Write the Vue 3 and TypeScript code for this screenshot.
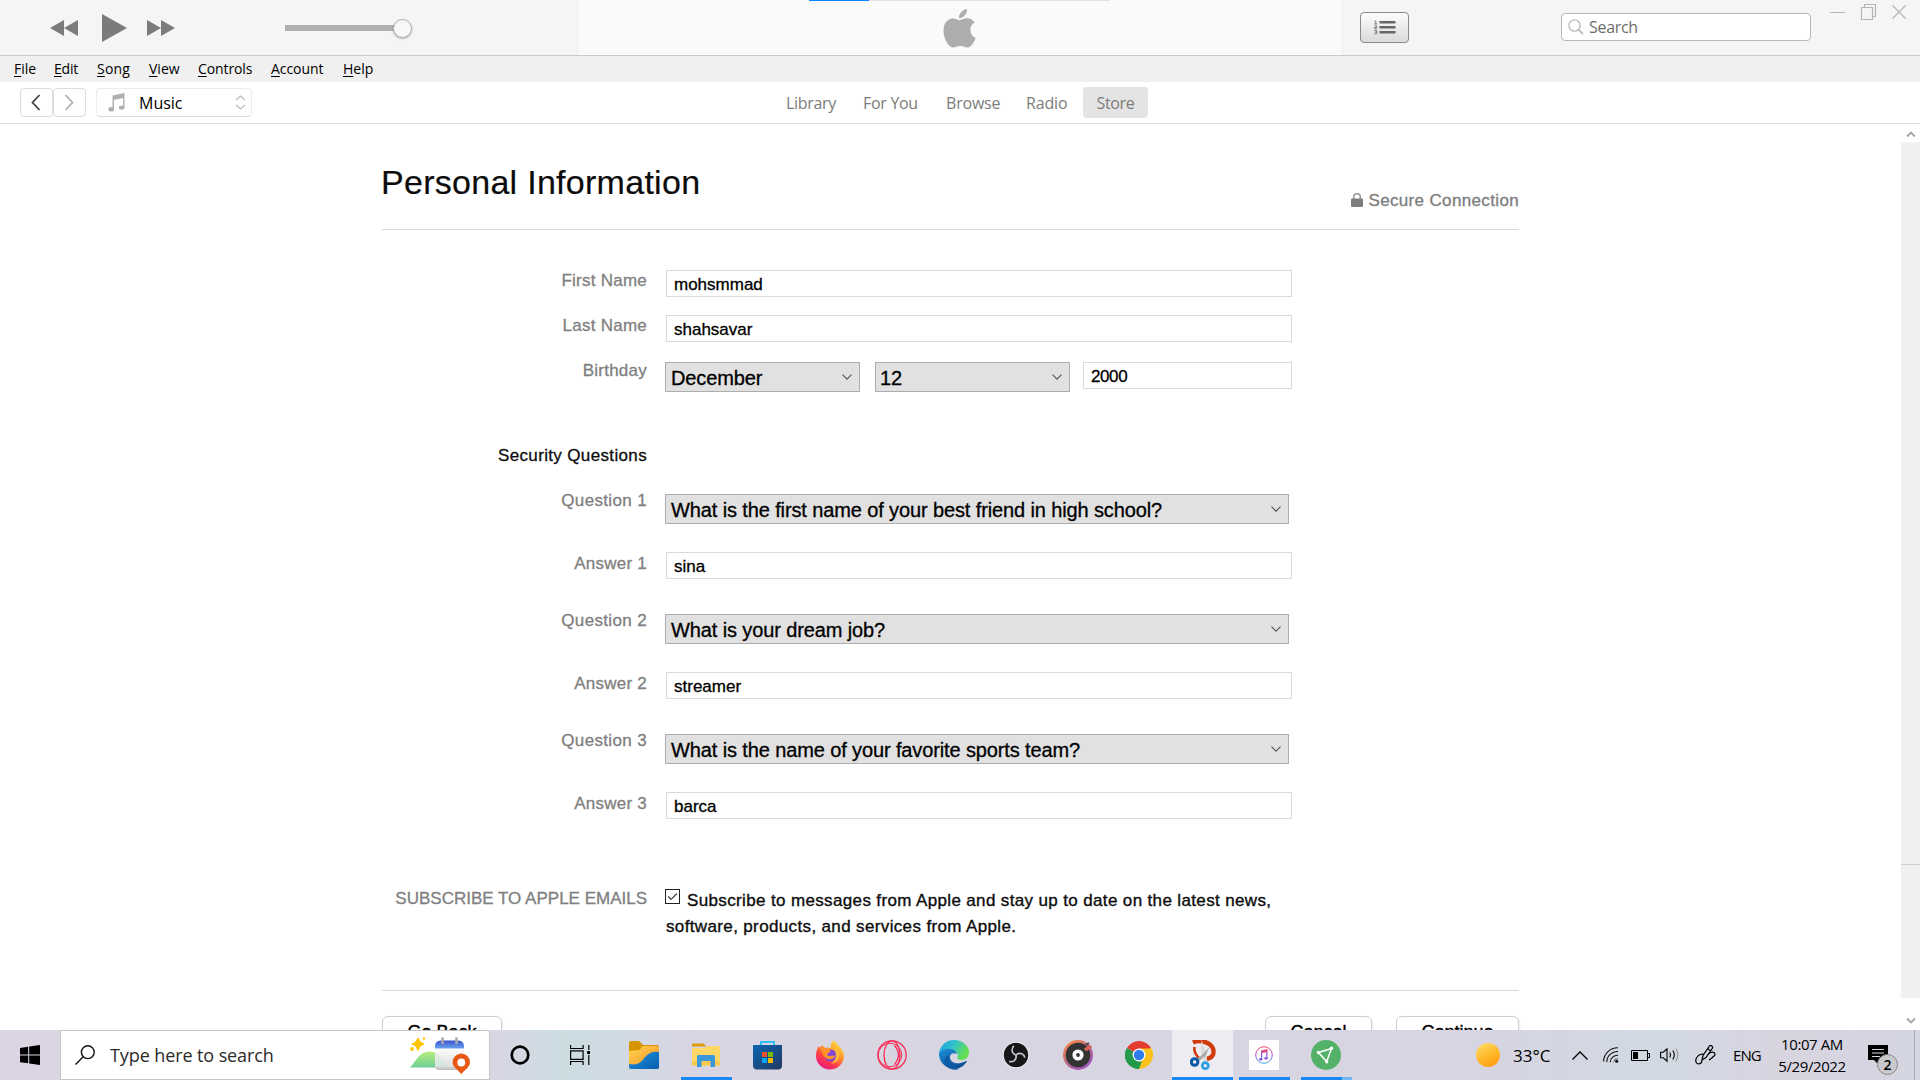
<script setup lang="ts">
interface MenuEntry { key: string; rest: string; cls: string }
interface Question { n: number; question: string; answer: string }

const menu: MenuEntry[] = [
  { key: 'F', rest: 'ile', cls: 'm-file' },
  { key: 'E', rest: 'dit', cls: 'm-edit' },
  { key: 'S', rest: 'ong', cls: 'm-song' },
  { key: 'V', rest: 'iew', cls: 'm-view' },
  { key: 'C', rest: 'ontrols', cls: 'm-controls' },
  { key: 'A', rest: 'ccount', cls: 'm-account' },
  { key: 'H', rest: 'elp', cls: 'm-help' },
]

const tabs = ['Library', 'For You', 'Browse', 'Radio', 'Store']

const questions: Question[] = [
  { n: 1, question: 'What is the first name of your best friend in high school?', answer: 'sina' },
  { n: 2, question: 'What is your dream job?', answer: 'streamer' },
  { n: 3, question: 'What is the name of your favorite sports team?', answer: 'barca' },
]
</script>

<template>
  <div class="screen">
    <header class="player">
      <div class="transport">
        <svg class="rewind" width="28" height="16" viewBox="0 0 28 16"><path d="M14 0v16L0 8zM28 0v16L14 8z" fill="#7b7b7b" /></svg>
        <svg class="play" width="25" height="28" viewBox="0 0 25 28"><path d="M0 0L25 14L0 28z" fill="#7b7b7b" /></svg>
        <svg class="forward" width="28" height="16" viewBox="0 0 28 16"><path d="M0 0v16L14 8zM14 0v16L28 8z" fill="#7b7b7b" /></svg>
        <div class="volume"><div class="knob"></div></div>
      </div>
      <div class="display">
        <div class="progress"><div class="progress-fill"></div></div>
        <svg class="apple" width="33" height="39" viewBox="0 0 33 39" fill="#adadad">
          <path d="M24 0c.4 4.600-3.500 9.200-8 9.200C15.500 4.800 19.700.5 24 0z" />
          <path d="M16.600 11.200c1.800 0 4-1.900 7.300-1.900 3 0 6 1.500 7.700 4.200-3 1.800-4.200 4.600-4.200 7.400 0 3.400 2 6.700 5.200 8-1.500 4.500-4.800 9.700-8.300 9.700-2.600 0-3.600-1.600-7.100-1.600-3.400 0-4.500 1.600-7 1.600C5.500 38.600.5 29.800.5 21.500c0-7.600 4.600-12 9.300-12 3 0 5.300 1.700 6.800 1.700z" />
        </svg>
      </div>
      <div class="tools">
        <button class="queue">
          <svg width="22" height="15" viewBox="0 0 22 15">
            <g fill="#666"><rect x="5.500" y="1" width="16" height="2.500" /><rect x="5.500" y="6" width="16" height="2.500" /><rect x="5.500" y="11" width="16" height="2.500" /></g>
            <g fill="none" stroke="#777" stroke-width=".9"><path d="M.5 1h1.300v3M.3 4h3M.4 6h2.400v1.400H.6v1.400h2.400M.4 10.600h2.400v3.200H.4M.8 12.200h2" /></g>
          </svg>
        </button>
        <div class="search">
          <svg width="16" height="16" viewBox="0 0 16 16" fill="none" stroke="#bdbdbd" stroke-width="1.400"><circle cx="6.500" cy="6.500" r="5.600" /><path d="M10.500 10.500L15 15" stroke-width="1.800" /></svg>
          <span>Search</span>
        </div>
        <div class="window">
          <svg width="78" height="17" viewBox="0 0 78 17" fill="none" stroke="#b5b5b5" stroke-width="1.200">
            <path d="M0 9.500h15M62.500 2.500l13 13M75.500 2.500l-13 13" />
            <path d="M31.500 4.500h11v12h-11zM34.500 4.500v-3h11v12h-3" />
          </svg>
        </div>
      </div>
    </header>

    <nav class="menubar">
      <span v-for="m in menu" :key="m.rest" :class="m.cls"><u>{{ m.key }}</u>{{ m.rest }}</span>
    </nav>

    <div class="subnav">
      <button class="arrow">
        <svg width="10" height="17" viewBox="0 0 10 17" fill="none" stroke="#444" stroke-width="1.800"><path d="M8.500 1L1.500 8.500l7 7.500" /></svg>
      </button>
      <button class="arrow next">
        <svg width="10" height="17" viewBox="0 0 10 17" fill="none" stroke="#aaa" stroke-width="1.600"><path d="M1.500 1l7 7.500-7 7.500" /></svg>
      </button>
      <div class="picker">
        <svg width="17" height="19" viewBox="0 0 17 19" fill="#b0b0b0"><path d="M4.500 2.500L16.500 0v14.500h-1.400V5L6 7v9.500H4.500z" /><ellipse cx="3.200" cy="16.300" rx="2.900" ry="2.300" /><ellipse cx="13.700" cy="14.600" rx="2.800" ry="2.200" /></svg>
        <span>Music</span>
        <svg class="updown" width="11" height="15" viewBox="0 0 11 15" fill="none" stroke="#bbb" stroke-width="1.300"><path d="M1 5l4.500-4L10 5M1 10l4.500 4L10 10" /></svg>
      </div>
      <div class="tabs">
        <span v-for="t in tabs" :key="t" class="tab" :class="'t-' + t.slice(0, 3).toLowerCase()">{{ t }}</span>
      </div>
    </div>

    <div class="body">
      <main class="page">
        <div class="heading">
          <h1>Personal Information</h1>
          <div class="secure">
            <svg width="12" height="14" viewBox="0 0 12 14"><path d="M2.700 6V4a3.300 3.300 0 0 1 6.600 0v2" fill="none" stroke="#999" stroke-width="1.600" /><rect x="0" y="5.500" width="12" height="8.500" rx="1" fill="#7d7d7d" /></svg>
            <span>Secure Connection</span>
          </div>
        </div>

        <div class="row"><label>First Name</label><div class="field">mohsmmad</div></div>
        <div class="row"><label>Last Name</label><div class="field">shahsavar</div></div>
        <div class="row birthday">
          <label>Birthday</label>
          <div class="select month"><span>December</span><svg width="10" height="6" viewBox="0 0 10 6"><path d="M.5.7L5 5.200 9.500.7" /></svg></div>
          <div class="select day"><span>12</span><svg width="10" height="6" viewBox="0 0 10 6"><path d="M.5.7L5 5.200 9.500.7" /></svg></div>
          <div class="field year">2000</div>
        </div>

        <div class="row"><label class="strong">Security Questions</label></div>
        <template v-for="q in questions" :key="q.n">
          <div class="row question">
            <label>Question {{ q.n }}</label>
            <div class="select"><span>{{ q.question }}</span><svg width="10" height="6" viewBox="0 0 10 6"><path d="M.5.7L5 5.200 9.500.7" /></svg></div>
          </div>
          <div class="row answer"><label>Answer {{ q.n }}</label><div class="field">{{ q.answer }}</div></div>
        </template>

        <div class="row subscribe">
          <label>SUBSCRIBE TO APPLE EMAILS</label>
          <div class="consent">
            <div class="line">
              <svg width="15" height="15" viewBox="0 0 15 15" fill="none" stroke="#222"><rect x=".5" y=".5" width="14" height="14" /><path d="M3.200 7.500l2.800 3L12 4.500" stroke-width="1.200" stroke="#444" /></svg>
              <span>Subscribe to messages from Apple and stay up to date on the latest news,</span>
            </div>
            <div>software, products, and services from Apple.</div>
          </div>
        </div>

        <div class="actions">
          <button class="back">Go Back</button>
          <button class="cancel">Cancel</button>
          <button class="continue">Continue</button>
        </div>
      </main>
      <aside class="scroll">
        <svg width="10" height="7" viewBox="0 0 10 7"><path d="M1 5.500l4-4 4 4" /></svg>
        <div class="track"><div class="thumb"></div></div>
        <svg width="10" height="7" viewBox="0 0 10 7"><path d="M1 1.500l4 4 4-4" /></svg>
      </aside>
    </div>

    <footer class="taskbar">
      <div class="start">
        <svg width="20" height="20" viewBox="0 0 20 20"><path d="M0 2.900l8.200-1.200v7.800H0zM9.200 1.500L20 0v9.500H9.200zM0 10.500h8.200v7.800L0 17.200zM9.200 10.500H20V20L9.200 18.400z" /></svg>
      </div>
      <div class="ask">
        <svg class="glass" width="20" height="20" viewBox="0 0 20 20" fill="none" stroke="#111" stroke-width="1.400"><circle cx="12.800" cy="7.200" r="6.400" /><path d="M8.200 11.800L.5 19.500" /></svg>
        <span>Type here to search</span>
        <svg class="art" width="60" height="38" viewBox="0 0 60 38">
          <defs>
            <linearGradient id="hill" x2="0" y2="1"><stop stop-color="#b6ec7c" /><stop offset="1" stop-color="#6fcf97" /></linearGradient>
            <linearGradient id="cal" x2="0" y2="1"><stop stop-color="#3a50d0" /><stop offset="1" stop-color="#6aa2ee" /></linearGradient>
            <linearGradient id="sheet" x2="0" y2="1"><stop stop-color="#fafafa" /><stop offset=".8" stop-color="#e0e0e0" /><stop offset="1" stop-color="#bbb" /></linearGradient>
          </defs>
          <path d="M0 30.500C6 24 10 14.500 19 14.500c8 0 11 4 16 16z" fill="url(#hill)" />
          <path d="M25 12h29v17a4 4 0 0 1-4 4H29a4 4 0 0 1-4-4z" fill="url(#sheet)" />
          <path d="M26 16l10 13H26z" fill="#cdebd2" opacity=".6" />
          <path d="M25 11.500V9a5.500 5.500 0 0 1 5.500-5.500h18A5.500 5.500 0 0 1 54 9v2.500z" fill="url(#cal)" />
          <path d="M32.500.5V7M46.500.5V7" stroke="#aaa" stroke-width="2.600" />
          <path d="M8 1l2.200 4 4 2-4 2L8 13.500 5.800 9l-4-2 4-2z" fill="#ffc400" stroke="#ffc400" stroke-width="1" />
          <circle cx="14" cy="1.500" r="1.200" fill="#ffc400" /><circle cx="2" cy="12" r="1.900" fill="#ffc400" />
          <path d="M51.300 37.500c-2-4-8.700-7-8.700-12.300a8.700 8.700 0 0 1 17.400 0c0 5.300-6.700 8.300-8.700 12.300z" fill="#e65a16" /><circle cx="51.300" cy="25.500" r="3.900" fill="#fff" />
        </svg>
      </div>

      <div class="slot narrow"><svg width="20" height="20" viewBox="0 0 20 20"><circle cx="10" cy="10" r="8.300" fill="none" stroke="#000" stroke-width="2.700" /></svg></div>
      <div class="slot view"><svg width="20" height="20" viewBox="0 0 20 20" fill="none" stroke="#000" stroke-width="1.200"><path d="M.6 0v3.500h12.500V0M.6 20v-3.500h12.500V20M.6 5.800h12.500v8.600H.6zM18.800 0v5M18.800 10v10" /><rect x="17.200" y="6" width="3" height="3" fill="#000" stroke="none" /></svg></div>

      <div class="slot">
        <svg width="30" height="30" viewBox="0 0 30 30">
          <defs><linearGradient id="fold" x2="1" y2="1"><stop stop-color="#ffd34d" /><stop offset="1" stop-color="#f0902a" /></linearGradient><linearGradient id="wave" x2="1" y2="1"><stop stop-color="#1c97e4" /><stop offset="1" stop-color="#0a5cad" /></linearGradient></defs>
          <path d="M0 3q0-2 2-2h8l4 4h14q2 0 2 2v6H0z" fill="#d69400" /><path d="M0 11l10-1 4-4h14q2 0 2 2v19q0 2-2 2H2q-2 0-2-2z" fill="url(#fold)" />
          <path d="M0 24c10 2 13-3 17-8 4-4 8-5 13-4v15q0 2-2 2H2q-2 0-2-2z" fill="url(#wave)" />
        </svg>
      </div>
      <div class="slot running">
        <svg width="28" height="24" viewBox="0 0 28 24"><path d="M0 1.500Q0 .5 1 .5h11l2 3H0z" fill="#dc9e0a" /><path d="M0 5h13l2-2h12q1 0 1 1v18.500H0z" fill="#ffd767" /><path d="M0 18h28v4.500H0z" fill="#f8c94e" /><path d="M5 24V13.500q0-1.500 1.500-1.500h15q1.500 0 1.500 1.500V24h-4.500v-6h-9v6z" fill="#3b97dc" /></svg>
      </div>
      <div class="slot store">
        <svg width="29" height="30" viewBox="0 0 29 30"><defs><linearGradient id="bag" x2="1" y2="1"><stop stop-color="#0865b3" /><stop offset="1" stop-color="#253a61" /></linearGradient></defs><path d="M8 7V2h13v5" fill="none" stroke="#2cc3f3" stroke-width="2" /><path d="M0 5h29v20.500q0 4-4 4H4q-4 0-4-4z" fill="url(#bag)" /><path d="M9 12h5v5H9z" fill="#f25022" /><path d="M15 12h5v5h-5z" fill="#7fba00" /><path d="M9 18h5v5H9z" fill="#00a4ef" /><path d="M15 18h5v5h-5z" fill="#ffb900" /></svg>
      </div>
      <div class="slot">
        <svg width="28" height="30" viewBox="0 0 28 30"><defs><linearGradient id="fox" x1=".9" y1="0" x2=".25" y2="1"><stop stop-color="#fff04a" /><stop offset=".4" stop-color="#ff9a2b" /><stop offset=".7" stop-color="#ff3d47" /><stop offset="1" stop-color="#e31587" /></linearGradient></defs><path d="M18 .5c2 3 5 5 6.500 7.500C27 11 28 13 28 16a14 13.500 0 0 1-28 0c0-4 1-8 3-10l1 2 2-3 3 3q3-1 6 0c-1-3 0-6 3-7.500z" fill="url(#fox)" /><circle cx="14.500" cy="15.500" r="6" fill="#8245d8" /><path d="M3 9q3-2 6 0l5 1q1 2-3 4 0 2 3 2 4-1 5 0-2 4-7 3-6-2-6-9z" fill="#ff9427" /><path d="M18 7q6 3 5 10-1 6-8 7 8-6 3-17z" fill="#ffc93b" opacity=".75" /></svg>
      </div>
      <div class="slot">
        <svg width="30" height="30" viewBox="0 0 30 30" fill="none" stroke="#fa2b55" stroke-width="1.300"><circle cx="15" cy="15" r="14.200" /><ellipse cx="15" cy="15" rx="8" ry="14.200" /><circle cx="13" cy="15" r="11.800" stroke-width="1" /><path d="M17.500 5.500q8 9 0 19" /></svg>
      </div>
      <div class="slot">
        <svg width="30" height="30" viewBox="0 0 30 30"><defs><linearGradient id="sea" x2="1" y2=".4"><stop stop-color="#1b9bdd" /><stop offset=".5" stop-color="#32c3cf" /><stop offset="1" stop-color="#65df4e" /></linearGradient><linearGradient id="deep" x2=".6" y2="1"><stop stop-color="#1d92dc" /><stop offset="1" stop-color="#0c4c93" /></linearGradient></defs><path d="M0 13C2 4 8 0 15 0c9 0 15 6 15 12.500 0 5-4 7.500-7.500 7.500-3.500 0-5-1.500-4-3 1-1.200 1-6-6.500-6C6 11 2 12 0 18z" fill="url(#sea)" /><path d="M0 14c3-7 16-7 18 0-4-2-7 0-7 3 0 5 6 9 16 4 .8-.2 1 .3.600 1A15 15 0 0 1 0 14z" fill="url(#deep)" /><path d="M10.500 15c-3 7 3 13 10 14q-6 2-11-1C4 24 4 16 10.500 15z" fill="#0d5aa7" /></svg>
      </div>
      <div class="slot">
        <svg width="28" height="28" viewBox="0 0 28 28"><circle cx="14" cy="14" r="12.800" fill="#171719" stroke="#eee" stroke-width="1.100" /><g fill="none" stroke="#c8c8cc" stroke-width="1.600"><path d="M14 14q-3.500-1-4-4.500-.2-3 2-4.500" /><path d="M14 14q-3.500-1-4-4.500-.2-3 2-4.500" transform="rotate(120 14 14)" /><path d="M14 14q-3.500-1-4-4.500-.2-3 2-4.500" transform="rotate(240 14 14)" /></g></svg>
      </div>
      <div class="slot">
        <svg width="30" height="30" viewBox="0 0 30 30"><defs><linearGradient id="ring" x1=".1" x2=".8" y2="1"><stop stop-color="#ff8a3c" /><stop offset=".5" stop-color="#bb6b85" /><stop offset="1" stop-color="#9a52c9" /></linearGradient></defs><circle cx="15" cy="15" r="15" fill="url(#ring)" /><circle cx="15" cy="15" r="12.300" fill="#333" /><circle cx="15" cy="15" r="5.600" fill="#fff" /><circle cx="15" cy="15" r="1.900" fill="#333" /><path d="M22 10l6-4" stroke="#d5615b" stroke-width="3.500" /><path d="M23 5l3-2" stroke="#444" stroke-width="2" /></svg>
      </div>
      <div class="slot chrome">
        <svg width="28" height="28" viewBox="0 0 28 28"><path d="M14 14L1.900 7A14 14 0 0 1 26.100 7z" fill="#e33b2e" /><path d="M14 14l12.100-7A14 14 0 0 1 14 28z" fill="#fcc31e" /><path d="M14 14v14A14 14 0 0 1 1.900 7z" fill="#239a4a" /><path d="M14 7.500h12.400q1.600 3 1.500 6.500L17 21l-3 7z" fill="#fcc31e" /><path d="M1.900 7L8.500 17.500 14 21l3-1-3 8A14 14 0 0 1 1.900 7z" fill="#239a4a" /><circle cx="14" cy="14" r="6.500" fill="#fff" /><circle cx="14" cy="14" r="5.200" fill="#2f7ded" /></svg>
      </div>
      <div class="slot active">
        <svg width="26" height="30" viewBox="0 0 26 30"><path d="M3 2.500C9-.5 20 1.500 23 8.500c2 7-2 10-7 10.500" fill="none" stroke="#d23b0b" stroke-width="4.400" /><path d="M3 7h2.600q-.6 7 6 11.500l-2 1.500Q2.500 15 3 7z" fill="#d23b0b" /><path d="M11.500 0l4.500 12 1.500 10.500-3.200.5-3.300-11z" fill="#dcdcdc" /><path d="M19.500 7l-4 9-6.500 5-2-2 6-5z" fill="#a9a9a9" /><circle cx="4.600" cy="22" r="3.300" fill="none" stroke="#0c59a8" stroke-width="3" /><circle cx="15.300" cy="25.700" r="3" fill="none" stroke="#2c9fe2" stroke-width="2.700" /></svg>
      </div>
      <div class="slot running">
        <svg width="30" height="30" viewBox="0 0 30 30"><defs><linearGradient id="tune" x2="0" y2="1"><stop stop-color="#f4475f" /><stop offset=".55" stop-color="#a357d7" /><stop offset="1" stop-color="#39a9ee" /></linearGradient></defs><path d="M0 0h30v30H0z" fill="#fff" /><circle cx="15" cy="15" r="8.300" fill="#fff" stroke="url(#tune)" stroke-width="1" /><path d="M12 10.500l6.500-1.500v9.500h-1.300v-6.300L13.300 13v6.500H12z" fill="url(#tune)" /><ellipse cx="11.700" cy="19.300" rx="1.700" ry="1.400" fill="#9c58da" /><ellipse cx="17" cy="18.300" rx="1.700" ry="1.400" fill="#9c58da" /></svg>
      </div>
      <div class="slot running stacked">
        <svg width="30" height="30" viewBox="0 0 30 30"><circle cx="15" cy="15" r="15" fill="#53b267" /><path d="M7.500 12.500L20.500 8.500 15.700 21.500z" fill="none" stroke="#fff" stroke-width="1.500" /><g fill="#fff"><circle cx="7.500" cy="12.500" r="1.700" /><circle cx="20.500" cy="8.300" r="1.700" /><circle cx="15.700" cy="21.700" r="1.700" /></g></svg>
      </div>

      <div class="tray">
        <div class="sun"></div>
        <span class="temp">33°C</span>
        <svg class="caret" width="16" height="9" viewBox="0 0 16 9" fill="none" stroke="#000" stroke-width="1.300"><path d="M.5 8.500L8 1l7.500 7.500" /></svg>
        <svg class="wifi" width="16" height="16" viewBox="0 0 16 16" fill="none" stroke="#111" stroke-width="1.100"><path d="M.6 14.500A14 14 0 0 1 15 .8M3.800 15A10.500 10.500 0 0 1 15 4.500M7.200 15.300A7.500 7.500 0 0 1 15 8.300" /><path d="M10.600 15.500A4.500 4.500 0 0 1 15 11.600" stroke="#888" /><circle cx="13.700" cy="14.200" r="1.500" fill="#000" stroke="none" /></svg>
        <svg class="battery" width="19" height="11" viewBox="0 0 19 11"><path d="M.5.5h16v10H.5zM16.500 3.500h2v4h-2" fill="none" stroke="#000" /><path d="M2 2h5v7H2z" /></svg>
        <svg class="speaker" width="21" height="18" viewBox="0 0 21 18" fill="none" stroke="#000" stroke-width="1.100"><path d="M.6 6.200h2.700L7 2.800v12.400l-3.700-3.400H.6zM9.800 6.500q1.500 2.500 0 5M12.800 4.500q3 4.500 0 9" /><path d="M15.800 2.500q4 6.500 0 13" stroke="#999" /></svg>
        <svg class="pen" width="21" height="20" viewBox="0 0 21 20" fill="none" stroke="#000" stroke-width="1.200"><path d="M7 15l1-4.500L14.500 1q1-1 2.300 0 1.300 1 .5 2.300L11 12.500zM12.500 3.500l3.500 2.700M8.500 9Q3 9 1 14q-1 4 2 5 4 0 4-4M13 9.500q3-3.500 6-2 2 1.500 0 3.500t-5 4" /></svg>
        <span class="lang">ENG</span>
        <div class="clock"><span>10:07 AM</span><span class="date">5/29/2022</span></div>
        <div class="notice">
          <svg width="20" height="20" viewBox="0 0 20 20"><path d="M0 0h20v15H11v5l-5-5H0z" /><path d="M4 4.500h12M4 8h12M4 11.500h8" stroke="#d5d6e0" stroke-width="1.100" /></svg>
          <span class="badge">2</span>
        </div>
        <div class="peek"></div>
      </div>
    </footer>
  </div>
</template>

<style>
html, body { margin: 0; overflow: hidden; background: #fff; }
</style>

<style scoped>
.screen { width: 1920px; height: 1080px; display: flex; flex-direction: column; overflow: hidden; background: #fff; font-family: 'Open Sans', 'Noto Sans', sans-serif; color: #000; }
.screen * { box-sizing: border-box; }
svg { display: block; flex: none; }
button { font: inherit; padding: 0; }
span { white-space: nowrap; }

.player { height: 56px; flex: none; display: flex; background: #f5f5f5; border-bottom: 1px solid #cacaca; }
.transport { width: 577px; display: flex; align-items: center; padding: 1px 0 0 50px; }
.play { margin-left: 24px; }
.forward { margin-left: 20px; }
.volume { width: 127px; height: 18px; margin-left: 110px; display: flex; align-items: center; justify-content: flex-end; background: linear-gradient(#b0b0b0, #b0b0b0) 0 6px / 118px 6px no-repeat; }
.knob { width: 19px; height: 19px; border-radius: 50%; background: #f7f7f7; border: 1px solid #b0b0b0; box-shadow: 0 1px 2px rgba(0, 0, 0, .25); }
.display { width: 766px; display: flex; flex-direction: column; align-items: center; background: #fafafa; border: solid #ececec; border-width: 0 1px; }
.progress { width: 301px; height: 1px; margin: 0 0 8px -1px; background: #e3e3e3; }
.progress-fill { width: 60px; height: 1px; background: #0a84ff; }
.apple { margin-right: 1px; }
.tools { flex: 1; display: flex; align-items: flex-start; padding-left: 17px; }
.queue { width: 49px; height: 31px; margin-top: 12px; display: flex; align-items: center; justify-content: center; border: 1px solid #8b8b8b; border-radius: 4px; background: linear-gradient(#fdfdfd, #dadada); }
.search { width: 250px; height: 28px; margin: 13px 0 0 152px; display: flex; align-items: center; padding-left: 6px; border: 1px solid #b9b9b9; border-radius: 4px; background: #fff; font-size: 16px; color: #6e6e6e; }
.search span { margin-left: 5px; letter-spacing: -.3px; }
.window { margin: 3px 0 0 19px; }

.menubar { height: 26px; flex: none; display: flex; padding-left: 14px; background: #f0f0f0; font-size: 14px; line-height: 26px; }
.menubar u { text-underline-offset: 2px; text-decoration-thickness: 1px; }
.m-file { width: 40px; }
.m-edit { width: 43px; letter-spacing: -.2px; }
.m-song { width: 52px; letter-spacing: .2px; }
.m-view { width: 49px; }
.m-controls { width: 73px; letter-spacing: -.1px; }
.m-account { width: 72px; letter-spacing: -.05px; }

.subnav { height: 42px; flex: none; display: flex; align-items: center; padding-left: 20px; border-bottom: 1px solid #dfdfdf; font-size: 16px; }
.arrow { width: 33px; height: 29px; display: flex; align-items: center; justify-content: center; padding-right: 1px; border: 1px solid #dcdcdc; border-radius: 4px; background: #fff; }
.next { margin-left: 0; }
.picker { width: 156px; height: 29px; margin-left: 10px; display: flex; align-items: center; padding-left: 11px; border: 1px solid #ececec; border-bottom-color: #dcdcdc; border-radius: 4px; }
.picker span { margin-left: 14px; letter-spacing: 0; }
.updown { margin: 0 5px 0 auto; }
.tabs { display: flex; margin-left: 534px; color: #7c7c7c; line-height: 31px; letter-spacing: -.3px; }
.tab { height: 31px; line-height: 32px; }
.t-lib { width: 77px; }
.t-for { width: 83px; }
.t-bro { width: 80px; letter-spacing: -.2px; }
.t-rad { width: 57px; letter-spacing: -.15px; }
.t-sto { width: 65px; text-align: center; background: #e4e4e4; border-radius: 4px; }

.body { flex: 1; min-height: 0; display: flex; justify-content: space-between; overflow: hidden; font-family: 'Liberation Sans', Arial, sans-serif; }
.page { width: 1137px; margin-left: 382px; font-size: 17px; }
.heading { height: 106px; margin-bottom: 40px; display: flex; justify-content: space-between; border-bottom: 1px solid #dadada; }
h1 { margin: 36px 0 0 -1px; font-size: 34px; line-height: 44px; font-weight: 400; letter-spacing: .28px; color: #0c0c0c; -webkit-text-stroke: .2px; }
.secure { height: 20px; margin: 67px 0 0; display: flex; align-items: center; gap: 5px; letter-spacing: .35px; line-height: 20px; color: #7d7d7d; -webkit-text-stroke: .3px; }
.secure svg { margin-bottom: 2px; }
.row { height: 45px; display: flex; align-items: flex-start; }
label { width: 265px; margin-right: 19px; padding-top: 1px; text-align: right; line-height: 20px; letter-spacing: .25px; color: #808080; white-space: nowrap; -webkit-text-stroke: .3px; }
.strong { color: #0c0c0c; letter-spacing: .35px; }
.field { width: 626px; height: 27px; padding: 1px 0 0 7px; border: 1px solid #dadada; background: #fff; line-height: 25px; -webkit-text-stroke: .3px; }
.select { width: 624px; height: 30px; margin-left: -1px; padding: 0 7px 0 5px; display: flex; align-items: center; justify-content: space-between; border: 1px solid #adadad; background: #e1e1e1; font-size: 20px; letter-spacing: -.12px; -webkit-text-stroke: .3px; }
.select span { padding-top: 2px; }
.select path { fill: none; stroke: #555; stroke-width: 1.100; }
.birthday { height: 85px; }
.birthday .select { width: 195px; margin-top: 2px; }
.birthday .day { margin-left: 15px; padding-left: 4px; }
.year { width: 209px; margin: 2px 0 0 13px; letter-spacing: -.4px; }
.question { height: 62px; }
.question label { letter-spacing: .35px; }
.question .select { margin-top: 4px; }
.answer { height: 58px; }
.answer label { margin-top: 1px; }
.subscribe { height: 132px; padding-top: 38px; }
.subscribe label { letter-spacing: 0; }
.consent { line-height: 26px; letter-spacing: .36px; white-space: nowrap; -webkit-text-stroke: .35px; color: #0c0c0c; }
.line { display: flex; margin-left: -1px; }
.line svg { margin: 1px 7px 0 0; }
.actions { height: 80px; margin-top: 8px; padding-top: 25px; display: flex; border-top: 1px solid #dadada; }
.actions button { height: 46px; border: 1px solid #cfcfcf; border-radius: 6px; background: #fff; box-shadow: 1px 1px 2px rgba(0, 0, 0, .08); font-size: 18px; line-height: 30px; padding-bottom: 14px; -webkit-text-stroke: .4px; }
.back { width: 120px; }
.cancel { width: 107px; margin-left: auto; }
.continue { width: 123px; margin-left: 24px; }
.scroll { width: 19px; display: flex; flex-direction: column; align-items: center; padding: 7px 0 6px; }
.scroll path { fill: none; stroke: #a5a5a5; stroke-width: 1.800; }
.track { width: 19px; flex: 1; margin: 4px 0 19px; background: #f0f0f0; }
.thumb { height: 723px; border-bottom: 1px solid #cfcfcf; }

.taskbar { height: 50px; flex: none; display: flex; background: linear-gradient(90deg, #dcd5e3 0, #d9d6e3 490px, #ccdde2 565px, #cfdbe2 610px, #d8d5e2 690px, #dad5e2 780px, #d6d5e1 1000px, #d6d5e1 1480px, #d1d9e3 1660px, #d8d4e0 1780px, #d4d6e1 1920px); }
.start { width: 60px; display: flex; align-items: center; justify-content: center; }
.ask { width: 430px; display: flex; align-items: center; padding-left: 14px; border: 1px solid #c6c6c6; background: #fff; font-size: 18px; color: #2b2b2b; }
.ask span { margin-left: 15px; letter-spacing: -.1px; }
.art { margin: 2px 19px 0 auto; }
.slot { width: 62px; height: 50px; flex: none; display: flex; align-items: center; justify-content: center; }
.narrow { width: 60px; }
.view { width: 63px; padding-right: 3px; }
.store, .chrome { padding-right: 2px; }
.running { background: linear-gradient(#1788f5, #1788f5) 6px 47px / 51px 3px no-repeat; }
.active { padding-left: 2px; background: linear-gradient(#1788f5, #1788f5) 1px 47px / 61px 3px no-repeat, linear-gradient(#edecf3, #edecf3) 1px 0 / 61px 50px no-repeat; }
.stacked { background: linear-gradient(#1788f5, #1788f5) 6px 47px / 41px 3px no-repeat, linear-gradient(#72b6f6, #72b6f6) 47px 47px / 10px 3px no-repeat; }
.tray { flex: 1; display: flex; align-items: center; font-size: 16px; }
.sun { width: 24px; height: 24px; margin-left: 119px; border-radius: 50%; background: linear-gradient(150deg, #ffe16b, #ffb627 55%, #ff9612); }
.temp { width: 59px; margin-left: 13px; padding-top: 1px; font-size: 17px; letter-spacing: 0; }
.wifi { margin-left: 15px; }
.battery { margin-left: 12px; }
.speaker { margin-left: 10px; }
.pen { margin-left: 14px; }
.lang { width: 27px; margin-left: 17px; font-size: 15px; letter-spacing: -.9px; }
.clock { width: 84px; margin-left: 10px; display: flex; flex-direction: column; align-items: center; font-size: 15px; line-height: 22px; letter-spacing: -.4px; }
.clock .date { padding-top: 1px; line-height: 21px; }
.notice { position: relative; margin-left: 14px; }
.badge { position: absolute; left: 9px; top: 9px; width: 21px; height: 21px; border: 1px solid #888; border-radius: 50%; background: #c9c9cd; font-size: 14px; font-weight: 600; line-height: 19px; text-align: center; }
.peek { width: 1px; height: 50px; margin: 0 5px 0 auto; background: #a9a9b3; }
</style>
